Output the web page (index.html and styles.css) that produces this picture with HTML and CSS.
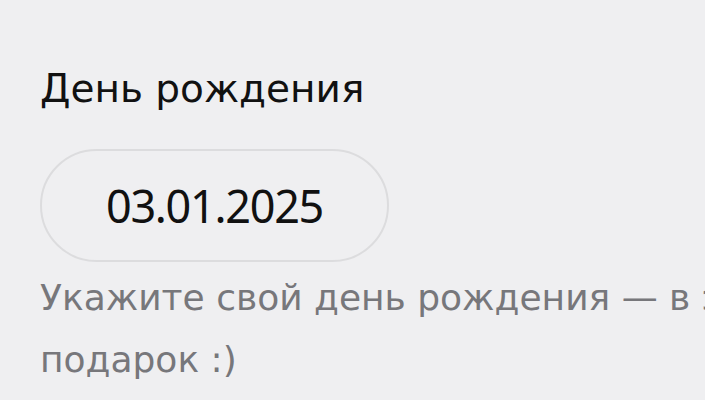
FILE: index.html
```html
<!DOCTYPE html>
<html lang="ru">
   <head>
      <meta charset="UTF-8">
      <title>День рождения</title>
      <link rel="stylesheet" href="styles.css">
   </head>
   <body>
      <div class="field">
         <label class="field-label" for="birthday">День рождения</label>
         <div class="date-pill" id="birthday">03.01.2025</div>
         <p class="field-hint">Укажите свой день рождения — в этот день вас ждёт подарок :)</p>
      </div>
   </body>
</html>
```

FILE: styles.css
```css
       /* page */
       html, body {
       margin: 0;
       padding: 0;
       background-color: #efeff1;
       overflow: hidden;
       }
       body {
       font-family: 'DejaVu Sans', 'Noto Sans', sans-serif;
       color: #111;
       }
       /* birthday field */
       .field {
       width: 1300px;
       padding: 61px 0 0 40px;
       }
       .field-label {
       display: block;
       font-size: 39px;
       line-height: 56px;
       }
       .date-pill {
       box-sizing: border-box;
       width: 349px;
       height: 113px;
       margin-top: 32px;
       border: 2px solid #dcdcde;
       border-radius: 57px;
       display: flex;
       align-items: center;
       justify-content: center;
       font-family: 'Noto Sans', sans-serif;
       font-size: 45px;
       letter-spacing: -1.3px;
       }
       .field-hint {
       margin: 5px 0 0;
       width: 1150px;
       font-size: 36px;
       line-height: 62px;
       color: #77777b;
       }
```
